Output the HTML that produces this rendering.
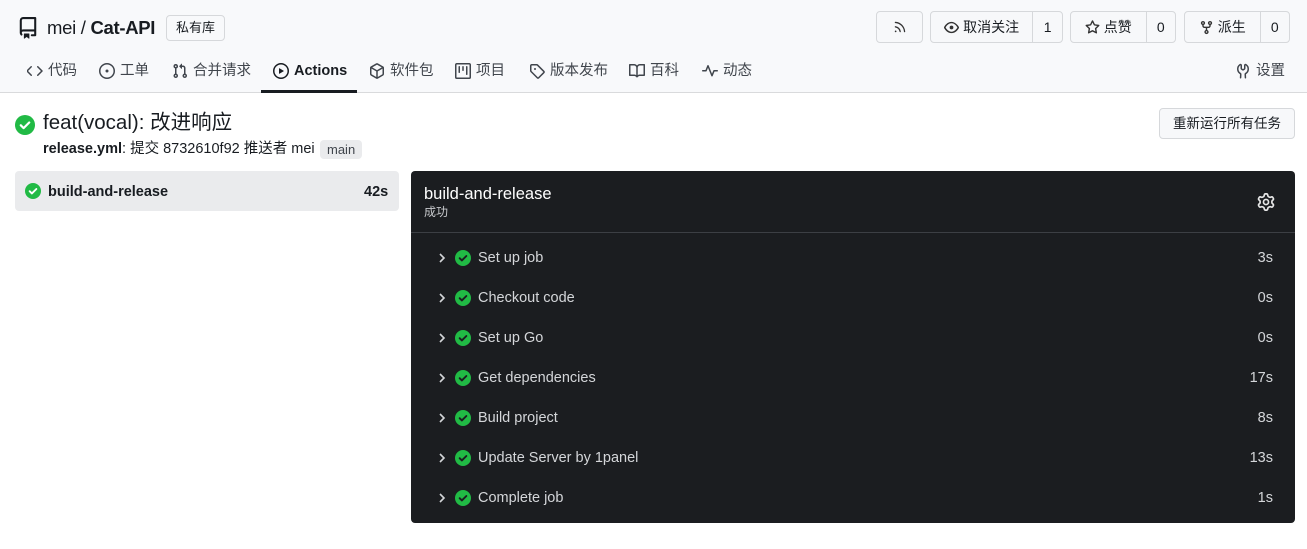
<!DOCTYPE html>
<html><head><meta charset="utf-8"><style>
*{box-sizing:border-box;margin:0;padding:0}
body{width:1307px;height:549px;background:#fff;font-family:"Liberation Sans","Noto Sans CJK SC",sans-serif;color:#181c21;position:relative;overflow:hidden;font-size:14px}
.a{position:absolute;white-space:nowrap}
.hdr{position:absolute;left:0;top:0;width:1307px;height:93px;background:#f8f9fb;border-bottom:1px solid #d9dadc}
.btn{position:absolute;top:11px;height:32px;border:1px solid #d6d8db;border-radius:4px;background:#f7f8fa;display:flex;align-items:center;font-size:14px}
.btn .dv{border-left:1px solid #d6d8db;height:100%;display:flex;align-items:center;justify-content:center}
.nav{position:absolute;top:61px;height:20px;line-height:20px;font-size:14.5px;color:#40454c;display:flex;align-items:center;gap:5px}
.nav svg{width:16px;height:16px;flex:none}
.step{position:absolute;left:411px;width:884px;height:40px;color:#d4d6d9;font-size:14.5px}
.step .ch{position:absolute;left:26px;top:13px}
.step .ck{position:absolute;left:44px;top:12px}
.step .t{position:absolute;left:67px;top:12px}
.step .d{position:absolute;right:22px;top:12px}
</style></head><body>
<div class="hdr"></div>
<svg class="a" style="left:17px;top:16px" width="22" height="24" viewBox="0 0 16 16" fill="#181c21"><path d="M2 2.5A2.5 2.5 0 0 1 4.5 0h8.75a.75.75 0 0 1 .75.75v12.5a.75.75 0 0 1-.75.75h-2.5a.75.75 0 0 1 0-1.5h1.75v-2h-8a1 1 0 0 0-.71 1.710.75.75 0 0 1-1.06 1.06A2.49 2.49 0 0 1 2 11.5Zm10.5-1h-8a1 1 0 0 0-1 1v6.71A2.490 2.490 0 0 1 4.5 9h8ZM5 12.25a.25.25 0 0 1 .25-.25h3.5a.25.25 0 0 1 .25.25v3.25a.25.25 0 0 1-.4.2l-1.45-1.09a.25.25 0 0 0-.3 0L5.4 15.7a.25.25 0 0 1-.4-.2Z"/></svg>
<div class="a" style="left:47px;top:17px;font-size:18.5px;letter-spacing:-0.3px">mei / <b>Cat-API</b></div>
<div class="a" style="left:166px;top:15px;height:26px;padding:0 9px;border:1px solid #d6d8db;border-radius:4px;font-size:13px;line-height:24px;background:#f8f9fb">私有库</div>

<div class="btn" style="left:876px;width:47px;justify-content:center"><svg width="14" height="14" viewBox="0 0 16 16" fill="#333"><path d="M2.002 2.725a.75.75 0 0 1 .797-.699C8.79 2.42 13.58 7.21 13.974 13.201a.75.75 0 0 1-1.497.098 10.502 10.502 0 0 0-9.776-9.776.747.747 0 0 1-.7-.798ZM2.84 7.05h-.002a7.002 7.002 0 0 1 6.113 6.111.75.75 0 0 1-1.49.178 5.503 5.503 0 0 0-4.8-4.8.75.75 0 0 1 .179-1.489ZM2 13a1 1 0 1 1 2 0 1 1 0 0 1-2 0Z"/></svg></div>
<div class="btn" style="left:930px;width:133px"><div style="width:102px;display:flex;align-items:center;justify-content:center;gap:4px"><svg width="15" height="15" viewBox="0 0 16 16" fill="#333"><path d="M8 2c1.98 0 3.75.97 5.07 2.1A11 11 0 0 1 15.9 7.5a1.2 1.2 0 0 1 0 1C15 10.3 12.3 14 8 14s-7-3.7-7.9-5.5a1.2 1.2 0 0 1 0-1C1 5.7 3.7 2 8 2ZM1.7 8C2.6 9.7 4.9 12.5 8 12.5S13.4 9.7 14.3 8C13.4 6.3 11.1 3.5 8 3.5S2.6 6.3 1.7 8ZM8 10a2 2 0 1 1 0-4 2 2 0 0 1 0 4Z"/></svg>取消关注</div><div class="dv" style="width:30px">1</div></div>
<div class="btn" style="left:1070px;width:106px"><div style="width:76px;display:flex;align-items:center;justify-content:center;gap:4px"><svg width="15" height="15" viewBox="0 0 16 16" fill="#333"><path d="M8 .25a.75.75 0 0 1 .673.418l1.882 3.815 4.21.612a.75.75 0 0 1 .416 1.279l-3.046 2.97.719 4.192a.75.75 0 0 1-1.088.791L8 12.347l-3.766 1.98a.75.75 0 0 1-1.088-.79l.72-4.194L.818 6.374a.75.75 0 0 1 .416-1.28l4.21-.611L7.327.668A.75.75 0 0 1 8 .25Zm0 2.445L6.615 5.5a.75.75 0 0 1-.564.41l-3.097.45 2.24 2.184a.75.75 0 0 1 .216.664l-.528 3.084 2.769-1.456a.75.75 0 0 1 .698 0l2.77 1.456-.53-3.084a.75.75 0 0 1 .216-.664l2.24-2.183-3.096-.45a.75.75 0 0 1-.564-.41Z"/></svg>点赞</div><div class="dv" style="width:30px">0</div></div>
<div class="btn" style="left:1184px;width:106px"><div style="width:76px;display:flex;align-items:center;justify-content:center;gap:4px"><svg width="15" height="15" viewBox="0 0 16 16" fill="#333"><path d="M5 5.372v.878c0 .414.336.75.75.75h4.5a.75.75 0 0 0 .75-.75v-.878a2.25 2.25 0 1 1 1.5 0v.878a2.25 2.25 0 0 1-2.25 2.25h-1.5v2.128a2.251 2.251 0 1 1-1.5 0V8.5h-1.5A2.25 2.25 0 0 1 3.5 6.25v-.878a2.25 2.25 0 1 1 1.5 0ZM5 3.25a.75.75 0 1 0-1.5 0 .75.75 0 0 0 1.5 0Zm6.75.75a.75.75 0 1 0 0-1.5.75.75 0 0 0 0 1.5Zm-3 8.75a.75.75 0 1 0-1.5 0 .75.75 0 0 0 1.5 0Z"/></svg>派生</div><div class="dv" style="width:30px">0</div></div>

<div class="nav" style="left:27px"><svg viewBox="0 0 16 16" fill="#40454c"><path d="m11.28 3.22 4.25 4.25a.75.75 0 0 1 0 1.06l-4.25 4.25a.75.75 0 0 1-1.060-1.06L13.94 8l-3.72-3.72a.75.75 0 0 1 1.06-1.06Zm-6.56 0a.75.75 0 0 1 0 1.06L1.06 8l3.72 3.72a.75.75 0 0 1-1.06 1.06L-.53 8.53a.75.75 0 0 1 0-1.06l4.25-4.25a.75.75 0 0 1 1.06 0Z"/></svg>代码</div>
<div class="nav" style="left:99px"><svg viewBox="0 0 16 16" fill="#40454c"><path d="M8 9.5a1.5 1.5 0 1 0 0-3 1.5 1.5 0 0 0 0 3Z"/><path d="M8 0a8 8 0 1 1 0 16A8 8 0 0 1 8 0ZM1.5 8a6.5 6.5 0 1 0 13 0 6.5 6.5 0 0 0-13 0Z"/></svg>工单</div>
<div class="nav" style="left:172px"><svg viewBox="0 0 16 16" fill="#40454c"><path d="M1.5 3.25a2.25 2.25 0 1 1 3 2.122v5.256a2.251 2.251 0 1 1-1.5 0V5.372A2.25 2.25 0 0 1 1.5 3.25Zm5.677-.177L9.573.677A.25.25 0 0 1 10 .854V2.5h1A2.5 2.5 0 0 1 13.5 5v5.628a2.251 2.251 0 1 1-1.5 0V5a1 1 0 0 0-1-1h-1v1.646a.25.25 0 0 1-.427.177L7.177 3.427a.25.25 0 0 1 0-.354ZM3.75 2.5a.75.75 0 1 0 0 1.5.75.75 0 0 0 0-1.5Zm0 9.5a.75.75 0 1 0 0 1.5.75.75 0 0 0 0-1.5Zm8.25.75a.75.75 0 1 0 1.5 0 .75.75 0 0 0-1.5 0Z"/></svg>合并请求</div>
<div class="nav" style="left:273px;color:#181c21;font-weight:bold"><svg viewBox="0 0 16 16" fill="#181c21"><path d="M8 0a8 8 0 1 1 0 16A8 8 0 0 1 8 0ZM1.5 8a6.5 6.5 0 1 0 13 0 6.5 6.5 0 0 0-13 0Zm4.879-2.773 4.264 2.559a.25.25 0 0 1 0 .428l-4.264 2.559A.25.25 0 0 1 6 10.559V5.442a.25.25 0 0 1 .379-.215Z"/></svg>Actions</div>
<div class="a" style="left:261px;top:90px;width:96px;height:3px;background:#181c21"></div>
<div class="nav" style="left:369px"><svg viewBox="0 0 16 16" fill="#40454c"><path d="m8.878.392 5.25 3.045c.54.314.872.89.872 1.514v6.098a1.75 1.75 0 0 1-.872 1.514l-5.25 3.045a1.75 1.75 0 0 1-1.756 0l-5.25-3.045A1.75 1.75 0 0 1 1 11.049V4.951c0-.624.332-1.201.872-1.514L7.122.392a1.75 1.75 0 0 1 1.756 0ZM7.875 1.69l-4.63 2.685L8 7.133l4.755-2.758-4.63-2.685a.248.248 0 0 0-.25 0ZM2.5 5.677v5.372c0 .09.047.171.125.216l4.625 2.683V8.432Zm6.25 8.271 4.625-2.683a.25.25 0 0 0 .125-.216V5.677L8.75 8.432Z"/></svg>软件包</div>
<div class="nav" style="left:455px"><svg viewBox="0 0 16 16" fill="#40454c"><path d="M1.75 0h12.5C15.216 0 16 .784 16 1.75v12.5A1.75 1.75 0 0 1 14.25 16H1.75A1.75 1.75 0 0 1 0 14.25V1.75C0 .784.784 0 1.75 0ZM1.5 1.75v12.5c0 .138.112.25.25.25h12.5a.25.25 0 0 0 .25-.25V1.75a.25.25 0 0 0-.25-.25H1.75a.25.25 0 0 0-.25.25ZM11.75 3a.75.75 0 0 1 .75.75v7.5a.75.75 0 0 1-1.5 0v-7.5a.75.75 0 0 1 .75-.75Zm-8.25.75a.75.75 0 0 1 1.5 0v5.5a.75.75 0 0 1-1.5 0ZM8 3a.75.75 0 0 1 .75.75v3.5a.75.75 0 0 1-1.5 0v-3.5A.75.75 0 0 1 8 3Z"/></svg>项目</div>
<div class="nav" style="left:529px"><svg viewBox="0 0 16 16" fill="#40454c"><path d="M1 7.775V2.75C1 1.784 1.784 1 2.75 1h5.025c.464 0 .91.184 1.238.513l6.25 6.25a1.75 1.75 0 0 1 0 2.474l-5.026 5.026a1.75 1.75 0 0 1-2.474 0l-6.25-6.25A1.752 1.752 0 0 1 1 7.775Zm1.5 0c0 .066.026.13.073.177l6.25 6.25a.25.25 0 0 0 .354 0l5.025-5.025a.25.25 0 0 0 0-.354l-6.25-6.25a.25.25 0 0 0-.177-.073H2.75a.25.25 0 0 0-.25.25ZM6 5a1 1 0 1 1 0 2 1 1 0 0 1 0-2Z"/></svg>版本发布</div>
<div class="nav" style="left:629px"><svg viewBox="0 0 16 16" fill="#40454c"><path d="M0 1.75A.75.75 0 0 1 .75 1h4.253c1.227 0 2.317.59 3 1.501A3.743 3.743 0 0 1 11.006 1h4.245a.75.75 0 0 1 .75.75v10.5a.75.75 0 0 1-.75.75h-4.507a2.25 2.25 0 0 0-1.591.659l-.622.621a.75.75 0 0 1-1.06 0l-.622-.621A2.25 2.25 0 0 0 5.258 13H.75a.75.75 0 0 1-.75-.75Zm7.251 10.324.004-5.073-.002-2.253A2.25 2.25 0 0 0 5.003 2.5H1.5v9h3.757a3.75 3.75 0 0 1 1.994.574ZM8.755 4.75l-.004 7.322a3.752 3.752 0 0 1 1.992-.572H14.5v-9h-3.495a2.25 2.25 0 0 0-2.25 2.25Z"/></svg>百科</div>
<div class="nav" style="left:702px"><svg viewBox="0 0 16 16" fill="#40454c"><path d="M6 2c.306 0 .582.187.696.471L10 10.731l1.304-3.26A.751.751 0 0 1 12 7h3.25a.75.75 0 0 1 0 1.5h-2.742l-1.812 4.528a.751.751 0 0 1-1.392 0L6 4.770 4.696 8.030A.75.75 0 0 1 4 8.5H.75a.75.75 0 0 1 0-1.5h2.742l1.812-4.529A.751.751 0 0 1 6 2Z"/></svg>动态</div>
<div class="nav" style="left:1235px"><svg viewBox="0 0 16 16" fill="#40454c"><path d="M5.433 2.304A4.492 4.492 0 0 0 3.5 6c0 1.598.832 3.002 2.09 3.802.518.328.929.923.902 1.64v.008l-.164 3.337a.75.75 0 1 1-1.498-.073l.163-3.33c.002-.085-.05-.216-.207-.316A5.996 5.996 0 0 1 2 6a5.993 5.993 0 0 1 2.567-4.920 1.482 1.482 0 0 1 1.673-.04c.462.296.76.827.76 1.423v2.82c0 .082.041.16.11.206l.75.51a.25.25 0 0 0 .28 0l.75-.51A.249.249 0 0 0 9 5.282V2.463c0-.596.298-1.127.76-1.423a1.482 1.482 0 0 1 1.673.04A5.993 5.993 0 0 1 14 6a5.996 5.996 0 0 1-2.786 5.068c-.157.1-.209.23-.207.315l.163 3.33a.752.752 0 0 1-1.094.714.75.75 0 0 1-.404-.64l-.164-3.345c-.027-.717.384-1.312.902-1.64A4.495 4.495 0 0 0 12.5 6a4.492 4.492 0 0 0-1.933-3.696c-.024.017-.067.067-.067.16v2.818a1.75 1.75 0 0 1-.767 1.448l-.75.51a1.75 1.75 0 0 1-1.966 0l-.75-.51A1.75 1.75 0 0 1 5.5 5.282V2.463c0-.092-.043-.142-.067-.159Z"/></svg>设置</div>

<svg class="a" style="left:15px;top:115px" width="20" height="20" viewBox="0 0 20 20"><circle cx="10" cy="10" r="10" fill="#21ba45"/><path d="M5.8 10.3l2.8 2.8 5.6-5.6" stroke="#fff" stroke-width="2.2" fill="none" stroke-linecap="round" stroke-linejoin="round"/></svg>
<div class="a" style="left:43px;top:111px;font-size:20.5px;line-height:24px">feat(vocal): 改进响应</div>
<div class="a" style="left:43px;top:140px;font-size:14.5px;line-height:19px"><b>release.yml</b>: 提交 8732610f92 推送者 mei</div>
<div class="a" style="left:320px;top:140px;height:19px;padding:0 7px;background:#eaebed;border-radius:4px;font-size:13px;line-height:19px;color:#40454c">main</div>
<div class="a" style="left:1159px;top:108px;width:136px;height:31px;border:1px solid #d6d8db;border-radius:4px;background:#f7f8fa;font-size:13.5px;line-height:29px;text-align:center">重新运行所有任务</div>

<div class="a" style="left:15px;top:171px;width:384px;height:40px;background:#eaebed;border-radius:4px"></div>
<svg class="a" style="left:25px;top:183px" width="16" height="16" viewBox="0 0 20 20"><circle cx="10" cy="10" r="10" fill="#21ba45"/><path d="M5.8 10.3l2.8 2.8 5.6-5.6" stroke="#fff" stroke-width="2.4" fill="none" stroke-linecap="round" stroke-linejoin="round"/></svg>
<div class="a" style="left:48px;top:182px;font-weight:bold;font-size:14.5px;line-height:20px">build-and-release</div>
<div class="a" style="left:364px;top:182px;font-weight:bold;font-size:14.5px;line-height:20px">42s</div>

<div class="a" style="left:411px;top:171px;width:884px;height:352px;background:#1b1d20;border-radius:4px"></div>
<div class="a" style="left:411px;top:232px;width:884px;height:1px;background:#3c3f44"></div>
<div class="a" style="left:424px;top:183px;color:#fff;font-size:16.5px;line-height:22px">build-and-release</div>
<div class="a" style="left:424px;top:204px;color:#c8cacd;font-size:12px;line-height:16px">成功</div>
<svg class="a" style="left:1257px;top:193px" width="18" height="18" viewBox="0 0 16 16" fill="#e6e6e6"><path d="M8 0a8.2 8.2 0 0 1 .701.031C9.444.095 9.99.645 10.16 1.29l.288 1.107c.018.066.079.158.212.224.231.114.454.243.668.386.123.082.233.09.299.071l1.103-.303c.644-.176 1.392.021 1.82.63.27.385.506.792.704 1.218.315.675.111 1.422-.364 1.891l-.814.806c-.049.048-.098.147-.088.294.016.257.016.515 0 .772-.01.147.038.246.088.294l.814.806c.475.469.679 1.216.364 1.891a7.977 7.977 0 0 1-.704 1.217c-.428.61-1.176.807-1.82.63l-1.102-.302c-.067-.019-.177-.011-.3.071a5.909 5.909 0 0 1-.668.386c-.133.066-.194.158-.211.224l-.29 1.106c-.168.646-.715 1.196-1.458 1.26a8.006 8.006 0 0 1-1.402 0c-.743-.064-1.289-.614-1.458-1.26l-.289-1.106c-.018-.066-.079-.158-.212-.224a5.738 5.738 0 0 1-.668-.386c-.123-.082-.233-.09-.299-.071l-1.103.303c-.644.176-1.392-.021-1.82-.63a8.12 8.12 0 0 1-.704-1.218c-.315-.675-.111-1.422.363-1.891l.815-.806c.05-.048.098-.147.088-.294a6.214 6.214 0 0 1 0-.772c.01-.147-.038-.246-.088-.294l-.815-.806C.635 6.045.431 5.298.746 4.623a7.92 7.92 0 0 1 .704-1.217c.428-.61 1.176-.807 1.82-.63l1.102.302c.067.019.177.011.3-.071.214-.143.437-.272.668-.386.133-.066.194-.158.211-.224l.29-1.106C6.009.645 6.556.095 7.299.03 7.53.01 7.764 0 8 0Zm-.571 1.525c-.036.003-.108.036-.137.146l-.289 1.105c-.147.561-.549.967-.998 1.189-.173.086-.34.183-.5.29-.417.278-.97.423-1.529.27l-1.103-.303c-.109-.03-.175.016-.195.045-.22.312-.412.644-.573.99-.014.031-.021.11.059.19l.815.806c.411.406.562.957.53 1.456a4.709 4.709 0 0 0 0 .582c.032.499-.119 1.05-.53 1.456l-.815.806c-.081.08-.073.159-.059.19.162.346.353.677.573.989.02.03.085.076.195.046l1.102-.303c.56-.153 1.113-.008 1.53.27.161.107.328.204.501.29.447.222.85.629.997 1.189l.289 1.105c.029.109.101.143.137.146a6.6 6.6 0 0 0 1.142 0c.036-.003.108-.036.137-.146l.289-1.105c.147-.561.549-.967.998-1.189.173-.086.34-.183.5-.29.417-.278.97-.423 1.529-.27l1.103.303c.109.029.175-.016.195-.045.22-.313.411-.644.573-.99.014-.031.021-.11-.059-.19l-.815-.806c-.411-.406-.562-.957-.53-1.456a4.709 4.709 0 0 0 0-.582c-.032-.499.119-1.05.53-1.456l.815-.806c.081-.08.073-.159.059-.19a6.464 6.464 0 0 0-.573-.989c-.02-.03-.085-.076-.195-.046l-1.102.303c-.56.153-1.113.008-1.53-.27a4.44 4.44 0 0 0-.501-.29c-.447-.222-.85-.629-.997-1.189l-.289-1.105c-.029-.11-.101-.143-.137-.146a6.6 6.6 0 0 0-1.142 0ZM11 8a3 3 0 1 1-6 0 3 3 0 0 1 6 0ZM9.5 8a1.5 1.5 0 1 0-3.001.001A1.5 1.5 0 0 0 9.5 8Z"/></svg>

<div class="step" style="top:238px"><svg class="ch" width="10" height="14" viewBox="0 0 10 14"><path d="M3 3l4 4-4 4" stroke="#d4d6d9" stroke-width="1.6" fill="none"/></svg><svg class="ck" width="16" height="16" viewBox="0 0 20 20"><circle cx="10" cy="10" r="10" fill="#21ba45"/><path d="M5.8 10.3l2.8 2.8 5.6-5.6" stroke="#1b1d20" stroke-width="2.4" fill="none" stroke-linecap="round" stroke-linejoin="round"/></svg><span class="t">Set up job</span><span class="d">3s</span></div>
<div class="step" style="top:278px"><svg class="ch" width="10" height="14" viewBox="0 0 10 14"><path d="M3 3l4 4-4 4" stroke="#d4d6d9" stroke-width="1.6" fill="none"/></svg><svg class="ck" width="16" height="16" viewBox="0 0 20 20"><circle cx="10" cy="10" r="10" fill="#21ba45"/><path d="M5.8 10.3l2.8 2.8 5.6-5.6" stroke="#1b1d20" stroke-width="2.4" fill="none" stroke-linecap="round" stroke-linejoin="round"/></svg><span class="t">Checkout code</span><span class="d">0s</span></div>
<div class="step" style="top:318px"><svg class="ch" width="10" height="14" viewBox="0 0 10 14"><path d="M3 3l4 4-4 4" stroke="#d4d6d9" stroke-width="1.6" fill="none"/></svg><svg class="ck" width="16" height="16" viewBox="0 0 20 20"><circle cx="10" cy="10" r="10" fill="#21ba45"/><path d="M5.8 10.3l2.8 2.8 5.6-5.6" stroke="#1b1d20" stroke-width="2.4" fill="none" stroke-linecap="round" stroke-linejoin="round"/></svg><span class="t">Set up Go</span><span class="d">0s</span></div>
<div class="step" style="top:358px"><svg class="ch" width="10" height="14" viewBox="0 0 10 14"><path d="M3 3l4 4-4 4" stroke="#d4d6d9" stroke-width="1.6" fill="none"/></svg><svg class="ck" width="16" height="16" viewBox="0 0 20 20"><circle cx="10" cy="10" r="10" fill="#21ba45"/><path d="M5.8 10.3l2.8 2.8 5.6-5.6" stroke="#1b1d20" stroke-width="2.4" fill="none" stroke-linecap="round" stroke-linejoin="round"/></svg><span class="t">Get dependencies</span><span class="d">17s</span></div>
<div class="step" style="top:398px"><svg class="ch" width="10" height="14" viewBox="0 0 10 14"><path d="M3 3l4 4-4 4" stroke="#d4d6d9" stroke-width="1.6" fill="none"/></svg><svg class="ck" width="16" height="16" viewBox="0 0 20 20"><circle cx="10" cy="10" r="10" fill="#21ba45"/><path d="M5.8 10.3l2.8 2.8 5.6-5.6" stroke="#1b1d20" stroke-width="2.4" fill="none" stroke-linecap="round" stroke-linejoin="round"/></svg><span class="t">Build project</span><span class="d">8s</span></div>
<div class="step" style="top:438px"><svg class="ch" width="10" height="14" viewBox="0 0 10 14"><path d="M3 3l4 4-4 4" stroke="#d4d6d9" stroke-width="1.6" fill="none"/></svg><svg class="ck" width="16" height="16" viewBox="0 0 20 20"><circle cx="10" cy="10" r="10" fill="#21ba45"/><path d="M5.8 10.3l2.8 2.8 5.6-5.6" stroke="#1b1d20" stroke-width="2.4" fill="none" stroke-linecap="round" stroke-linejoin="round"/></svg><span class="t">Update Server by 1panel</span><span class="d">13s</span></div>
<div class="step" style="top:478px"><svg class="ch" width="10" height="14" viewBox="0 0 10 14"><path d="M3 3l4 4-4 4" stroke="#d4d6d9" stroke-width="1.6" fill="none"/></svg><svg class="ck" width="16" height="16" viewBox="0 0 20 20"><circle cx="10" cy="10" r="10" fill="#21ba45"/><path d="M5.8 10.3l2.8 2.8 5.6-5.6" stroke="#1b1d20" stroke-width="2.4" fill="none" stroke-linecap="round" stroke-linejoin="round"/></svg><span class="t">Complete job</span><span class="d">1s</span></div>
</body></html>
